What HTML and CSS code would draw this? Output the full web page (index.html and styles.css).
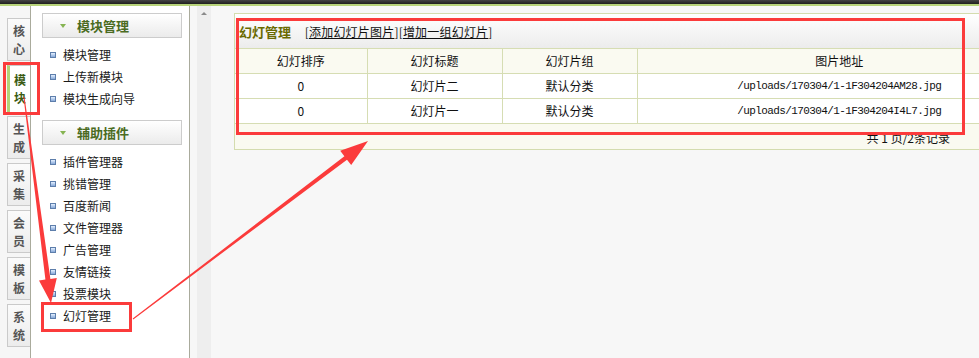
FILE: index.html
```html
<!DOCTYPE html>
<html lang="zh-CN">
<head>
  <meta charset="UTF-8" />
  <title>幻灯管理</title>
  <link rel="stylesheet" href="styles.css">
</head>
<body>

<div class="topbar"></div>

<div class="layout">
  <div class="tabs">
    <div class="tab"><span>核</span><span>心</span></div>
    <div class="tab active"><span>模</span><span>块</span></div>
    <div class="tab"><span>生</span><span>成</span></div>
    <div class="tab"><span>采</span><span>集</span></div>
    <div class="tab"><span>会</span><span>员</span></div>
    <div class="tab"><span>模</span><span>板</span></div>
    <div class="tab"><span>系</span><span>统</span></div>
  </div>

  <div class="menu">
    <div class="menu-head"><span class="caret"></span>模块管理</div>
    <ul class="menu-list">
      <li>模块管理</li>
      <li>上传新模块</li>
      <li>模块生成向导</li>
    </ul>
    <div class="menu-head"><span class="caret"></span>辅助插件</div>
    <ul class="menu-list">
      <li>插件管理器</li>
      <li>挑错管理</li>
      <li>百度新闻</li>
      <li>文件管理器</li>
      <li>广告管理</li>
      <li>友情链接</li>
      <li>投票模块</li>
      <li>幻灯管理</li>
    </ul>
  </div>

  <div class="gutter"></div>
  <div class="scrollbar"><span class="scroll-up"></span></div>

  <div class="main">
    <div class="box">
      <div class="box-title">
        <b>幻灯管理</b>
        <span class="links">[<a href="#">添加幻灯片图片</a>][<a href="#">增加一组幻灯片</a>]</span>
      </div>
      <table class="grid">
        <colgroup>
          <col style="width:132px">
          <col style="width:135px">
          <col style="width:135px">
          <col>
        </colgroup>
        <tr class="head">
          <td>幻灯排序</td>
          <td>幻灯标题</td>
          <td>幻灯片组</td>
          <td>图片地址</td>
        </tr>
        <tr>
          <td>0</td>
          <td>幻灯片二</td>
          <td>默认分类</td>
          <td class="path">/uploads/170304/1-1F304204AM28.jpg</td>
        </tr>
        <tr>
          <td>0</td>
          <td>幻灯片一</td>
          <td>默认分类</td>
          <td class="path">/uploads/170304/1-1F304204I4L7.jpg</td>
        </tr>
      </table>
      <div class="box-foot">共 1 页/2条记录</div>
    </div>
  </div>
</div>

<!-- annotation marks drawn over the screenshot -->
<svg class="marks" width="979" height="358" viewBox="0 0 979 358">
  <g fill="none" stroke="#fb3b3b" stroke-width="3">
    <rect x="4.5" y="63.5" width="34" height="50"/>
    <rect x="42.5" y="303.5" width="88" height="27"/>
    <rect x="237.5" y="19.5" width="726" height="114"/>
  </g>
  <g fill="#fb3b3b">
    <polygon points="23.5,97.1 24.5,96.9 50.4,278.9 56.8,278 51,303 39,280.4 45.4,279.5"/>
    <polygon points="132.7,318.6 344.4,156.2 340.2,150.8 368,141 351.2,165.1 347,159.7 133.3,319.4"/>
  </g>
</svg>

</body>
</html>
```

FILE: styles.css
```css
body {
  margin: 0;
  width: 979px;
  height: 358px;
  overflow: hidden;
  position: relative;
  background: #f7f7f7;
  font-family: "Noto Sans CJK SC", "Noto Sans", sans-serif;
  font-size: 12px;
  color: #222;
}

.topbar {
  height: 4px;
  background: linear-gradient(to bottom, #444, #1f1f1f);
  border-bottom: 2px solid #b7d37a;
}

.layout {
  display: flex;
  height: 352px;
}

/* left vertical tabs */
.tabs {
  width: 23px;
  padding: 12px 0 0 7px;
  border-right: 1px solid #aaab9c;
  background: #f6f6f6;
}

.tab {
  box-sizing: border-box;
  height: 43px;
  margin-bottom: 4px;
  border: 1px solid #cacaca;
  border-right: none;
  background: linear-gradient(to bottom, #fbfbfb, #ececec);
  display: flex;
  flex-direction: column;
  align-items: center;
  justify-content: center;
  gap: 6px;
  font-size: 12px;
  font-weight: bold;
  line-height: 12px;
  color: #555;
}

.tab.active {
  height: 48px;
  margin-bottom: 3px;
  background: #fff;
  border-left: 3px solid #b3d276;
  color: #3a5a12;
}

/* module menu */
.menu {
  width: 147px;
  padding: 7px 0 0 11px;
  background: #fff;
  border-right: 1px solid #aaab9c;
}

.menu-head {
  box-sizing: border-box;
  width: 140px;
  height: 25px;
  border: 1px solid #cccccc;
  background: linear-gradient(to bottom, #ffffff, #ebebeb);
  padding-left: 34px;
  font-size: 13px;
  font-weight: bold;
  line-height: 23px;
  color: #4a6b22;
  position: relative;
}

.caret {
  position: absolute;
  left: 17px;
  top: 10px;
  border-left: 3px solid transparent;
  border-right: 3px solid transparent;
  border-top: 4px solid #86b452;
}

.menu-list {
  list-style: none;
  margin: 6px 0 10px;
  padding: 0 0 0 8px;
}

.menu-list li {
  height: 22px;
  line-height: 22px;
  padding-left: 13px;
  position: relative;
  font-size: 12px;
  color: #1a1a1a;
}

.menu-list li::before {
  content: "";
  position: absolute;
  left: 0;
  top: 8px;
  width: 4px;
  height: 4px;
  border: 1px solid #5d7eab;
  background: linear-gradient(to bottom, #e3efff, #86a8d8);
}

.gutter {
  width: 7px;
  background: #f7f7f7;
}

.scrollbar {
  width: 14px;
  background: #eeeeee;
  position: relative;
}

.scroll-up {
  position: absolute;
  left: 4px;
  top: 6px;
  border-left: 3px solid transparent;
  border-right: 3px solid transparent;
  border-bottom: 3px solid #8a8a8a;
}

/* main content */
.main {
  flex: 1;
  overflow: hidden;
  padding: 7px 0 0 23px;
}

.box {
  width: 807px;
  border: 1px solid #d4dcae;
  background: #fafaf0;
}

.box-title {
  height: 34px;
  line-height: 35px;
  padding-left: 4px;
  background: linear-gradient(to bottom, #ffffff, #ececec);
  white-space: nowrap;
}

.box-title b {
  font-size: 13px;
  color: #6a6a00;
  margin-right: 11px;
}

.links {
  letter-spacing: 0.2px;
}

.links a {
  color: #111;
  text-decoration: underline;
}

.grid {
  width: 807px;
  border-collapse: collapse;
  table-layout: fixed;
}

.grid td {
  height: 24px;
  padding: 0;
  border: 1px solid #d6ddb3;
  text-align: center;
  line-height: 24px;
  background: #fff;
  color: #111;
}

.grid td:first-child {
  border-left: none;
}

.grid .head td {
  background: #fafaf1;
}

.grid .path {
  font-family: "Liberation Mono", monospace;
  font-size: 11px;
  letter-spacing: -0.6px;
}

.box-foot {
  height: 25px;
  line-height: 27px;
  text-align: right;
  padding-right: 92px;
  color: #111;
}

.marks {
  position: absolute;
  top: 0;
  left: 0;
  pointer-events: none;
}
```
